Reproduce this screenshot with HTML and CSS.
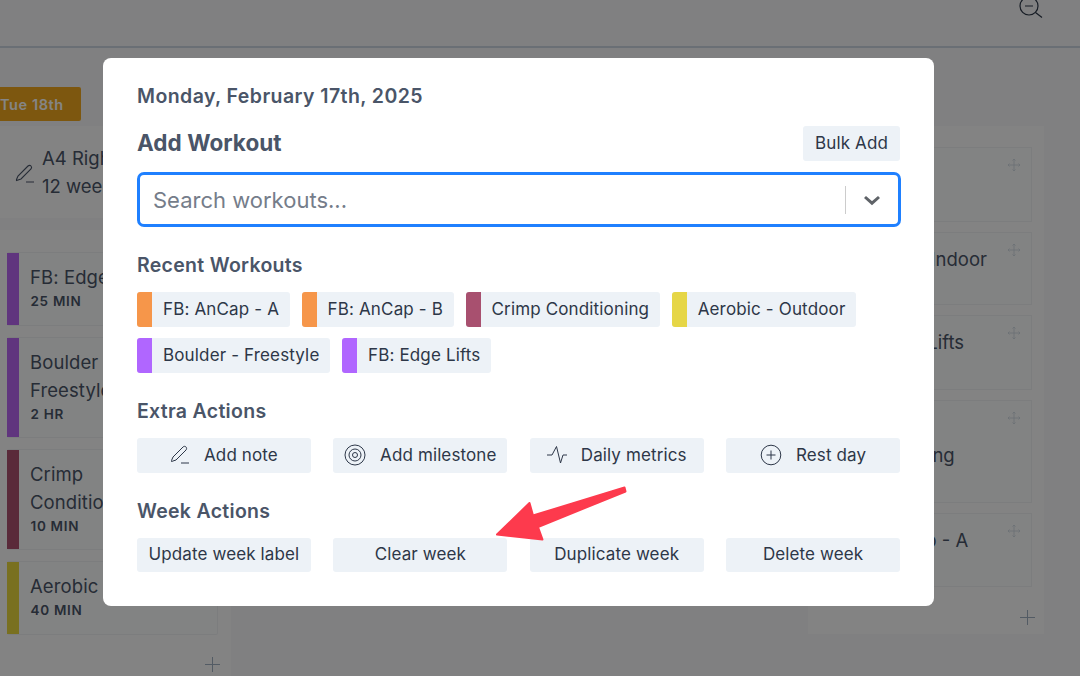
FILE: index.html
```html
<!DOCTYPE html>
<html lang="en">
<head>
<meta charset="utf-8">
<title>Add Workout</title>
<link rel="stylesheet" href="styles.css">
</head>
<body>
<div class="page">
  <header class="topbar">
    <svg class="zoom-out" viewBox="0 0 26 26" width="26" height="26" fill="none" stroke="currentColor" stroke-width="1.2"><circle cx="10" cy="6" r="9"/><path d="M6 6h8M16.500 12.500l6.500 5"/></svg>
  </header>
  <main class="board">
    <section class="col col-left">
      <div class="day-badge">Tue 18th</div>
      <div class="note">
        <svg class="ico" viewBox="0 0 20 20" width="20" height="20" fill="none" stroke="currentColor" stroke-width="1.100"><path d="M1.500 15.500 3 12 13 2c1-.9 2.200-.9 3 0s.8 2 0 3L6 15l-4.500 1.500ZM11 18h8"/></svg>
        <div>A4 Right<br>12 weeks</div>
      </div>
      <div class="cards">
        <div class="card h74"><i class="bar purple"></i><div class="body"><p>FB: Edge Lifts</p><small>25 MIN</small></div></div>
        <div class="card h101"><i class="bar purple"></i><div class="body"><p>Boulder -<br>Freestyle</p><small>2 HR</small></div></div>
        <div class="card h101"><i class="bar wine"></i><div class="body"><p>Crimp<br>Conditioning</p><small>10 MIN</small></div></div>
        <div class="card h74"><i class="bar olive"></i><div class="body"><p>Aerobic - Outdoor</p><small>40 MIN</small></div></div>
      </div>
      <svg class="plus" viewBox="0 0 15 15" width="15" height="15" fill="none" stroke="currentColor" stroke-width="1"><path d="M7.500 0v15M0 7.500h15"/></svg>
    </section>
    <section class="col col-right">
      <div class="rcard r1"><svg class="mv" viewBox="0 0 12 12" width="12" height="12" fill="none" stroke="currentColor" stroke-width=".8"><path d="M6 0v12M0 6h12M4.500 1.500 6 0l1.500 1.500M4.500 10.500 6 12l1.500-1.500M1.500 4.500 0 6l1.500 1.500M10.500 4.500 12 6l-1.500 1.500"/></svg></div>
      <div class="rcard r2">Boulder - Indoor<svg class="mv" viewBox="0 0 12 12" width="12" height="12" fill="none" stroke="currentColor" stroke-width=".8"><path d="M6 0v12M0 6h12M4.500 1.500 6 0l1.500 1.500M4.500 10.500 6 12l1.500-1.500M1.500 4.500 0 6l1.500 1.500M10.500 4.500 12 6l-1.500 1.500"/></svg></div>
      <div class="rcard r1">FB: Edge Lifts<svg class="mv" viewBox="0 0 12 12" width="12" height="12" fill="none" stroke="currentColor" stroke-width=".8"><path d="M6 0v12M0 6h12M4.500 1.500 6 0l1.500 1.500M4.500 10.500 6 12l1.500-1.500M1.500 4.500 0 6l1.500 1.500M10.500 4.500 12 6l-1.500 1.500"/></svg></div>
      <div class="rcard r4">Crimp<br>Conditioning<svg class="mv" viewBox="0 0 12 12" width="12" height="12" fill="none" stroke="currentColor" stroke-width=".8"><path d="M6 0v12M0 6h12M4.500 1.500 6 0l1.500 1.500M4.500 10.500 6 12l1.500-1.500M1.500 4.500 0 6l1.500 1.500M10.500 4.500 12 6l-1.500 1.500"/></svg></div>
      <div class="rcard r5">FB: AnCap - A<svg class="mv" viewBox="0 0 12 12" width="12" height="12" fill="none" stroke="currentColor" stroke-width=".8"><path d="M6 0v12M0 6h12M4.500 1.500 6 0l1.500 1.500M4.500 10.500 6 12l1.500-1.500M1.500 4.500 0 6l1.500 1.500M10.500 4.500 12 6l-1.500 1.500"/></svg></div>
      <svg class="plus plus-right" viewBox="0 0 15 15" width="15" height="15" fill="none" stroke="currentColor" stroke-width="1"><path d="M7.500 0v15M0 7.500h15"/></svg>
    </section>
  </main>
</div>
<div class="overlay"></div>
<div class="modal">
  <h3 class="date">Monday, February 17th, 2025</h3>
  <div class="title-row">
    <h2>Add Workout</h2>
    <button class="btn bulk">Bulk Add</button>
  </div>
  <div class="search">
    <span class="placeholder">Search workouts...</span>
    <span class="sep"></span>
    <svg class="chev" viewBox="0 0 20 20" width="20" height="20" fill="none" stroke="currentColor" stroke-width="3"><path d="M3 7l7 6.200L17 7"/></svg>
  </div>
  <h4 class="recent-h">Recent Workouts</h4>
  <div class="chips">
    <button class="chip"><i class="orange"></i>FB: AnCap - A</button>
    <button class="chip"><i class="orange"></i>FB: AnCap - B</button>
    <button class="chip"><i class="rose"></i>Crimp Conditioning</button>
    <button class="chip"><i class="yellow"></i>Aerobic - Outdoor</button>
    <button class="chip"><i class="violet"></i>Boulder - Freestyle</button>
    <button class="chip"><i class="violet"></i>FB: Edge Lifts</button>
  </div>
  <h4 class="extra-h">Extra Actions</h4>
  <div class="grid">
    <button class="btn"><svg viewBox="0 0 20 20" width="20" height="20" fill="none" stroke="currentColor" stroke-width="1"><path d="M1.500 15.500 3 12 13 2c1-.9 2.200-.9 3 0s.8 2 0 3L6 15l-4.500 1.500ZM11 18h8"/></svg>Add note</button>
    <button class="btn"><svg viewBox="0 0 22 22" width="22" height="22" fill="none" stroke="currentColor" stroke-width="1"><circle cx="11" cy="11" r="10"/><circle cx="11" cy="11" r="6"/><circle cx="11" cy="11" r="2.500"/></svg>Add milestone</button>
    <button class="btn"><svg viewBox="0 0 20 20" width="20" height="20" fill="none" stroke="currentColor" stroke-width="1"><path d="M0 10h5l4.500-8.500 4 16.500 2.500-8h4"/></svg>Daily metrics</button>
    <button class="btn"><svg viewBox="0 0 22 22" width="22" height="22" fill="none" stroke="currentColor" stroke-width="1"><circle cx="11" cy="11" r="9.800"/><path d="M11 6.500v9M6.500 11h9"/></svg>Rest day</button>
  </div>
  <h4 class="week-h">Week Actions</h4>
  <div class="grid week-grid">
    <button class="btn">Update week label</button>
    <button class="btn">Clear week</button>
    <button class="btn">Duplicate week</button>
    <button class="btn">Delete week</button>
  </div>
</div>
<svg class="arrow" viewBox="0 0 1080 676" width="1080" height="676"><path d="M624.500 487.500 533 515.500 529.500 503 497 534.500 542.500 539.500 538 527 625.500 491.500Z" fill="#fd3a4d" stroke="#fd3a4d" stroke-width="2" stroke-linejoin="round"/></svg>
</body>
</html>
```
FILE: styles.css
```css
* { box-sizing: border-box; }
html, body { margin: 0; height: 100%; overflow: hidden; }
body { font-family: Inter, "Liberation Sans", sans-serif; background: #f5f6f7; color: #2d3748; }

.page { width: 1080px; height: 676px; overflow: hidden; }
.topbar { height: 48px; border-bottom: 2px solid #cbd5e0; display: flex; justify-content: flex-end; padding-right: 35px; }
.zoom-out { color: #2d3748; }
.board { display: flex; justify-content: space-between; padding-right: 36px; }
.col { position: relative; }

.col-left { width: 231px; }
.day-badge { margin-top: 39px; width: 81px; height: 34px; background: #f0a81e; color: #fff; font-size: 14.500px; font-weight: 600; letter-spacing: .6px; line-height: 35px; border-radius: 0 2px 2px 0; }
.note { height: 92px; margin-top: 5px; background: #fcfcfc; display: flex; align-items: center; gap: 7px; padding-left: 15px; font-size: 18.500px; line-height: 28px; color: #4a5568; white-space: nowrap; }
.ico { margin-top: 4px; }
.cards { background: #fcfcfc; margin-top: 12px; padding: 22px 13px 0 7px; display: flex; flex-direction: column; gap: 11px; height: 447px; overflow: hidden; }
.card { display: flex; flex: none; background: #fafbfb; border: 1px solid #edf0f2; border-left: 0; border-radius: 2px; }
.h74 { height: 74px; }
.h101 { height: 101px; }
.bar { width: 12px; flex: none; display: block; }
.purple { background: #b866f2; }
.wine { background: #ad5270; }
.olive { background: #e8d63e; }
.body { padding: 10px 0 0 11px; white-space: nowrap; }
.body p { margin: 0; font-size: 18.500px; line-height: 28px; letter-spacing: .1px; color: #4a5568; }
.body small { display: block; margin: 1px 0 0 .5px; font-size: 13.500px; font-weight: 600; line-height: 18px; letter-spacing: .7px; color: #4a5568; }
.plus { position: absolute; right: 11px; bottom: 5px; color: #a0aec0; }

.col-right { width: 236px; height: 508px; margin-top: 78px; background: #fcfcfc; padding: 21px 12px 0; display: flex; flex-direction: column; gap: 10px; }
.rcard { position: relative; background: #fafbfb; border: 1px solid #edf0f2; flex: none; font-size: 18.500px; line-height: 28px; color: #4a5568; white-space: nowrap; padding: 12px 0 0 23px; }
.r1 { height: 75px; }
.r2 { height: 73px; }
.r4 { height: 103px; }
.r5 { height: 74px; }
.mv { position: absolute; right: 11px; top: 11px; color: #cbd5e0; }
.plus-right { right: 9px; bottom: 9px; }

.overlay { position: fixed; inset: 0; background: rgba(0, 0, 0, .48); }
.modal { position: fixed; left: 103px; top: 58px; width: 831px; height: 548px; background: #fff; border-radius: 8px; padding: 25px 34px 0; }
.date { margin: 0; font-size: 19.500px; line-height: 27px; font-weight: 600; letter-spacing: .42px; color: #4a5568; }
.title-row { display: flex; justify-content: space-between; align-items: flex-start; height: 35px; margin-top: 16px; }
h2 { margin: 0; font-size: 22.500px; line-height: 33px; font-weight: 700; letter-spacing: .05px; color: #4a5568; }
h4 { margin: 0; font-size: 19.500px; line-height: 24px; font-weight: 600; letter-spacing: .3px; color: #4a5568; }
.btn { font: inherit; font-size: 17px; letter-spacing: .12px; color: #2d3748; background: #edf2f7; border: 0; border-radius: 3px; height: 34.500px; display: flex; align-items: center; justify-content: center; gap: 14px; padding: 0 0 1px; white-space: nowrap; }
.bulk { width: 97px; height: 35px; }
.search { height: 55px; margin-top: 11px; margin-right: -1px; border: 3px solid #1f80ff; border-radius: 7px; display: flex; align-items: center; padding-left: 13px; }
.placeholder { flex: 1; font-size: 22px; color: #757d8a; }
.sep { width: 1px; height: 28px; background: #ccc; }
.chev { color: #5f6368; margin: 0 16px; }
.recent-h { margin-top: 26px; }
.chips { display: flex; flex-wrap: wrap; gap: 11px 11.500px; margin-top: 15px; }
.chip { font: inherit; font-size: 17px; letter-spacing: .15px; color: #2d3748; background: #edf2f7; border: 0; border-radius: 3px; height: 35px; display: flex; align-items: center; gap: 11px; padding: 0 11px 1px 0; overflow: hidden; }
.chip i { width: 15px; height: 35px; display: block; flex: none; }
.orange { background: #f6964a; }
.rose { background: #a8506f; }
.yellow { background: #e6d646; }
.violet { background: #b066ff; }
.extra-h { margin-top: 26px; }
.grid { display: grid; grid-template-columns: repeat(4, 1fr); column-gap: 22.500px; margin-top: 15px; }
.week-h { margin-top: 26.500px; }
.week-grid { margin-top: 14.500px; }
.arrow { position: fixed; left: 0; top: 0; pointer-events: none; }
```
